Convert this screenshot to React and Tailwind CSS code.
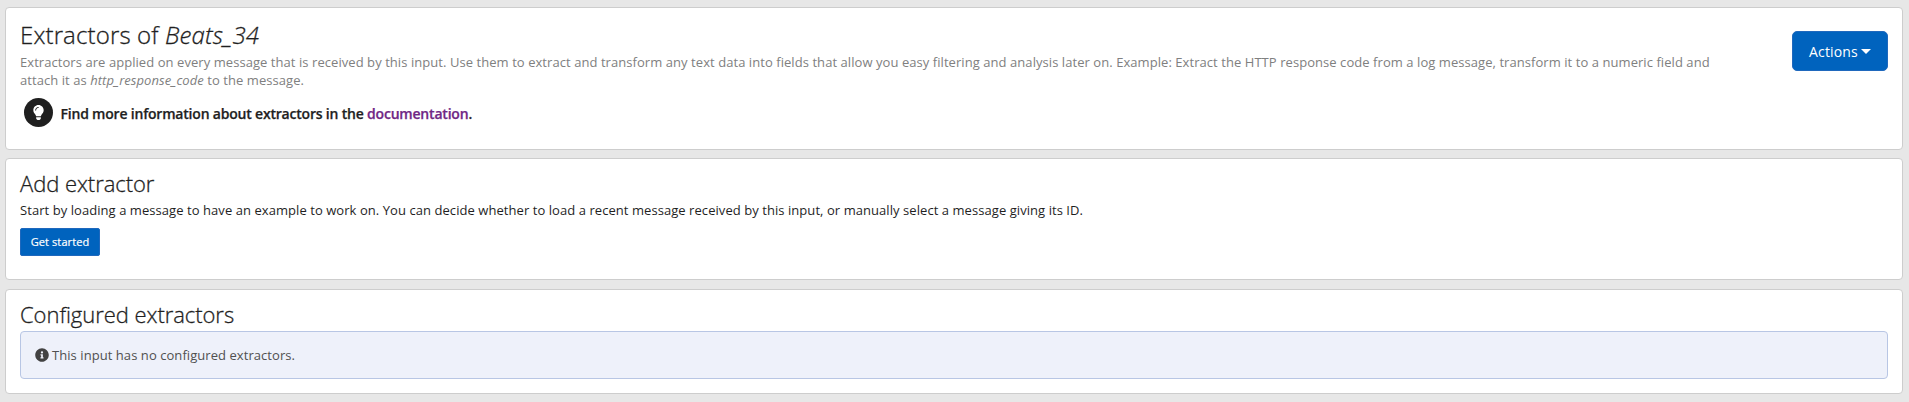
import React from "react";
import { FaLightbulb } from "react-icons/fa";

function Panel({ className, children }) {
  return (
    <section className={`rounded border border-[#cdcdcd] bg-white pr-[14px] pl-[14px] ${className}`}>
      {children}
    </section>
  );
}

export default function App() {
  return (
    <main className="h-[402px] w-[1909px] overflow-hidden bg-[#e7e7e7] pt-[7px] pr-[6px] pl-[5px] font-['Open_Sans','Noto_Sans',sans-serif] text-[13px] tracking-[0.06px] text-[#1f1f1f]">
      <Panel className="flex h-[143px] items-start justify-between">
        <div className="pt-[14px]">
          <h1 className="h-[26px] text-[24px] leading-[26px] font-light tracking-[0.14px] whitespace-nowrap text-[#1f1f1f] [-webkit-text-stroke:0.3px_#1f1f1f]">
            Extractors of <em>Beats_34</em>
          </h1>
          <p className="mt-[5px] leading-[18px] whitespace-nowrap text-[#808080]">
            Extractors are applied on every message that is received by this input. Use them to extract and transform any text data into fields that allow you easy filtering and analysis later on. Example: Extract the HTTP response code from a log message, transform it to a numeric field and
            <br />
            attach it as <em>http_response_code</em> to the message.
          </p>
          <div className="mt-[9px] flex items-center pl-[4px]">
            <span className="flex h-[29px] w-[29px] items-center justify-center rounded-full bg-[#1f1f1f] text-white">
              <FaLightbulb size={15} />
            </span>
            <strong className="ml-[7.500px] pt-[2px] text-[14px] leading-[20px] font-semibold tracking-[-0.2px] whitespace-nowrap [-webkit-text-stroke:0.25px_currentColor]">
              Find more information about extractors in the <a className="text-[#702785]">documentation</a>.
            </strong>
          </div>
        </div>
        <button className="mt-[23px] flex h-[40px] w-[96px] items-center justify-center rounded-[5px] border border-[#1f68bd] bg-[#0063be] text-[14px] tracking-[0.15px] text-white">
          Actions
          <svg className="ml-[3px]" width="10" height="5" viewBox="0 0 10 5">
            <path d="M0 0h10L5 5z" fill="currentColor" />
          </svg>
        </button>
      </Panel>

      <Panel className="mt-[8px] h-[122px] pt-[12px]">
        <h2 className="h-[24px] text-[22px] leading-[24px] font-light tracking-[-0.05px] whitespace-nowrap text-[#1f1f1f] [-webkit-text-stroke:0.3px_#1f1f1f]">Add extractor</h2>
        <p className="mt-[6px] leading-[18px] whitespace-nowrap">
          Start by loading a message to have an example to work on. You can decide whether to load a recent message received by this input, or manually select a message giving its ID.
        </p>
        <button className="mt-[9px] flex h-[28px] w-[80px] items-center justify-center rounded-[2px] border border-[#1f68bd] bg-[#0063be] text-[11px] tracking-[0.1px] text-white [-webkit-text-stroke:0.2px_currentColor]">
          Get started
        </button>
      </Panel>

      <Panel className="mt-[9px] h-[105px] pt-[12px]">
        <h2 className="h-[24px] text-[22px] leading-[24px] font-light tracking-[-0.05px] whitespace-nowrap text-[#1f1f1f] [-webkit-text-stroke:0.3px_#1f1f1f]">Configured extractors</h2>
        <div className="mt-[5px] flex h-[48px] items-center rounded border border-[#b8c6e4] bg-[#eef1fa] pl-[14px] text-[#505050]">
          <svg width="14" height="14" viewBox="0 0 512 512" fill="#424242">
            <path d="M256 8C119 8 8 119 8 256s111 248 248 248 248-111 248-248S393 8 256 8zm0 110a42 42 0 1 1 0 84 42 42 0 0 1 0-84zm56 254c0 7-5 12-12 12h-88c-7 0-12-5-12-12v-24c0-7 5-12 12-12h12v-64h-12c-7 0-12-5-12-12v-24c0-7 5-12 12-12h64c7 0 12 5 12 12v100h12c7 0 12 5 12 12z" />
          </svg>
          <span className="ml-[3px] pt-px whitespace-nowrap">This input has no configured extractors.</span>
        </div>
      </Panel>
    </main>
  );
}
